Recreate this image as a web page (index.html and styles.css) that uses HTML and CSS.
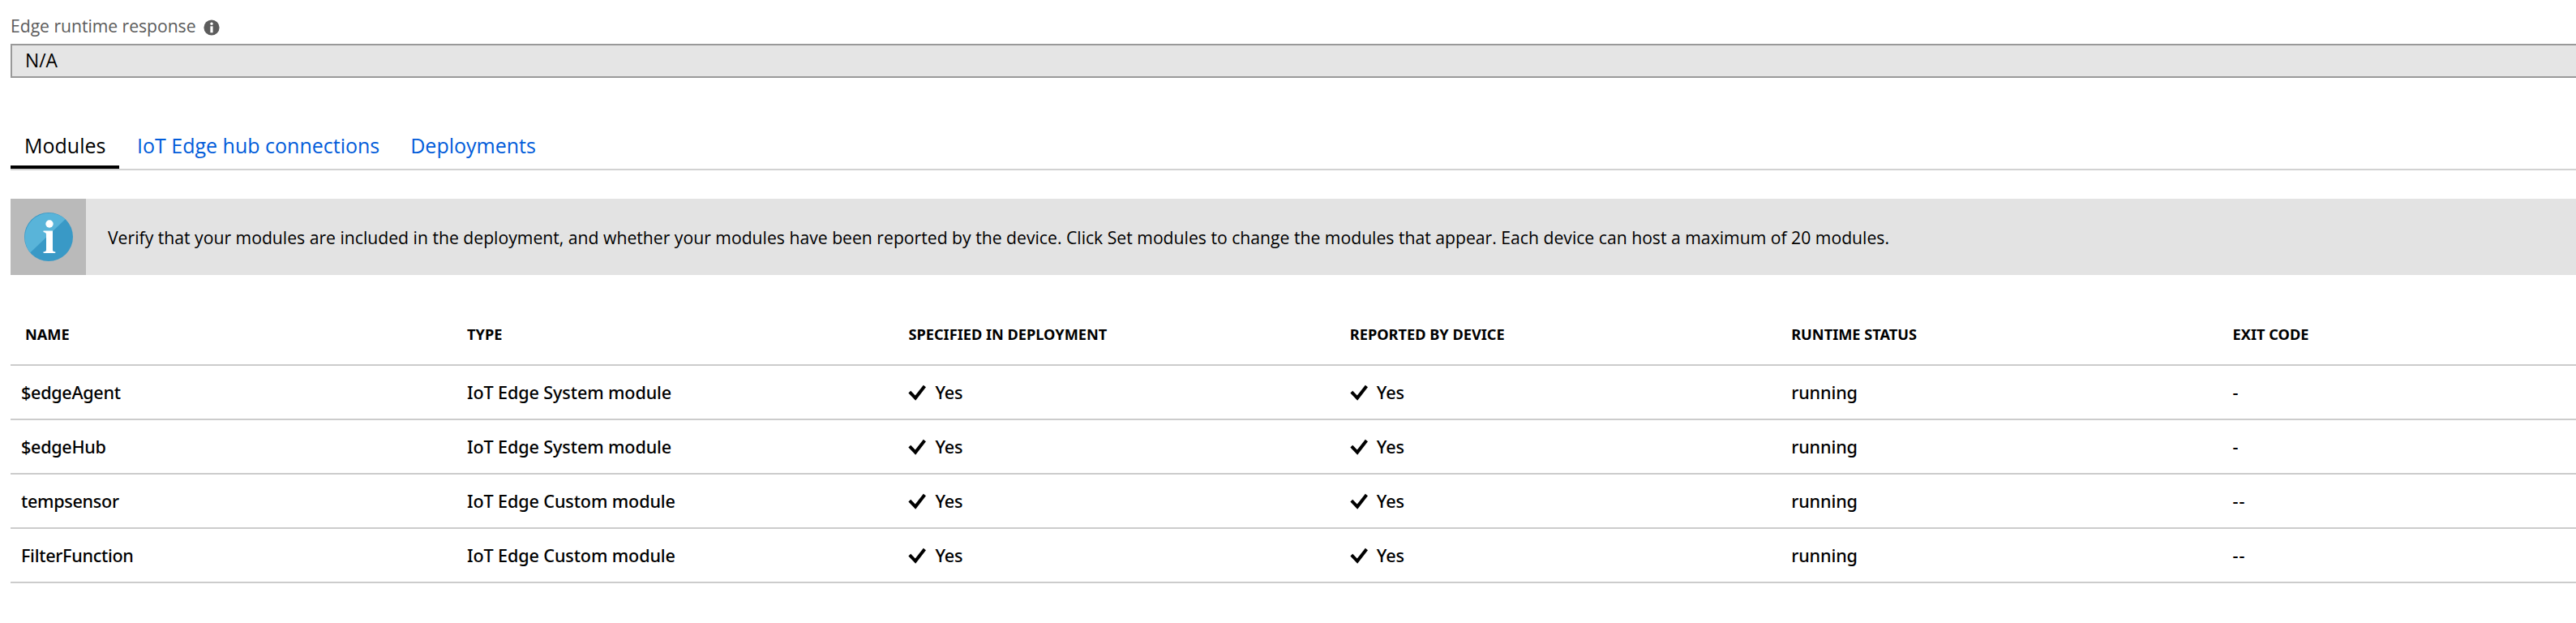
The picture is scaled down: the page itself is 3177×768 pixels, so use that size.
FILE: index.html
```html
<!DOCTYPE html>
<html lang="en">
<head>
<meta charset="utf-8">
<title>IoT Edge device modules</title>
<link rel="stylesheet" href="styles.css">
</head>
<body>
<svg class="sprite" aria-hidden="true">
  <symbol id="check" viewBox="0 0 22 20"><path d="M1.8 9.2 L9 16.600 L20.400 2" fill="none" stroke="#000" stroke-width="4"/></symbol>
</svg>
<main class="page">
  <div class="label">
    <span>Edge runtime response</span>
    <svg class="hint" viewBox="0 0 20 20"><circle cx="10" cy="10" r="9.6" fill="#5c5c5c"/><circle cx="10" cy="5.2" r="1.7" fill="#fff"/><path d="M8.4 8.3h3.2v8H8.4z" fill="#fff"/></svg>
  </div>
  <div class="field">N/A</div>
  <nav class="tabs">
    <a class="tab active">Modules</a>
    <a class="tab hub">IoT Edge hub connections</a>
    <a class="tab">Deployments</a>
  </nav>
  <section class="banner">
    <div class="banner-icon">
      <svg class="info" viewBox="0 0 60 60"><circle cx="30" cy="30" r="30" fill="#3999c6"/><path d="M50.5 8.2A30 30 0 0 0 7.2 49.4z" fill="#59b4d9"/><circle cx="31" cy="14" r="4.7" fill="#fff"/><path d="M23.5 22.5H35V46q0 2 3.3 2.500V50H23.500v-1.500Q27 48 27 46V27q0-2.500-3.500-3z" fill="#fff"/></svg>
    </div>
    <p class="banner-text">Verify that your modules are included in the deployment, and whether your modules have been reported by the device. Click Set modules to change the modules that appear. Each device can host a maximum of 20 modules.</p>
  </section>
  <section class="table">
    <div class="row head"><span class="first">NAME</span><span>TYPE</span><span>SPECIFIED IN DEPLOYMENT</span><span>REPORTED BY DEVICE</span><span>RUNTIME STATUS</span><span>EXIT CODE</span></div>
    <div class="row"><span class="first">$edgeAgent</span><span>IoT Edge System module</span><span class="yes"><svg class="check"><use href="#check"/></svg>Yes</span><span class="yes"><svg class="check"><use href="#check"/></svg>Yes</span><span>running</span><span class="code">-</span></div>
    <div class="row"><span class="first">$edgeHub</span><span>IoT Edge System module</span><span class="yes"><svg class="check"><use href="#check"/></svg>Yes</span><span class="yes"><svg class="check"><use href="#check"/></svg>Yes</span><span>running</span><span class="code">-</span></div>
    <div class="row"><span class="first">tempsensor</span><span>IoT Edge Custom module</span><span class="yes"><svg class="check"><use href="#check"/></svg>Yes</span><span class="yes"><svg class="check"><use href="#check"/></svg>Yes</span><span>running</span><span class="code">--</span></div>
    <div class="row"><span class="first">FilterFunction</span><span>IoT Edge Custom module</span><span class="yes"><svg class="check"><use href="#check"/></svg>Yes</span><span class="yes"><svg class="check"><use href="#check"/></svg>Yes</span><span>running</span><span class="code">--</span></div>
  </section>
</main>
</body>
</html>
```
FILE: styles.css
```css
* { box-sizing: border-box; }
body { margin: 0; background: #fff; color: #000; font-family: "Open Sans", "Noto Sans", sans-serif; overflow: hidden; }
.sprite { display: none; }
.page { padding: 12px 0 0 13px; }
.label { display: flex; align-items: flex-start; height: 42px; font-size: 21.2px; letter-spacing: -0.05px; line-height: 40px; color: #5c5c5c; }
.hint { width: 20px; height: 20px; margin: 12px 0 0 9px; }
.field { height: 42px; border: 2px solid #999; border-right: 0; background: #e5e5e5; padding-left: 16px; font-size: 22.8px; line-height: 38px; }
.tabs { display: flex; height: 114px; padding-top: 52px; border-bottom: 2px solid #d2d2d2; font-size: 25px; line-height: 62px; }
.tab { color: #015cda; height: 60px; margin-right: 38px; }
.tab.active { width: 134px; margin-right: 22px; padding-left: 17px; color: #000; border-bottom: 4px solid #000; }
.banner { display: flex; height: 94px; margin-top: 35px; background: #e3e3e3; }
.banner-icon { width: 93px; padding: 17px 0 0 17px; background: #bababa; }
.info { display: block; width: 60px; height: 60px; }
.banner-text { margin: 0; padding-left: 27px; font-size: 21.18px; line-height: 95px; white-space: nowrap; }
.table { margin-top: 43px; }
.row { display: grid; grid-template-columns: 563px 544.4px 544.4px 544.4px 544.4px 1fr; height: 67px; border-bottom: 2px solid #ccc; font-family: "Noto Sans", sans-serif; font-size: 21.6px; font-weight: 500; letter-spacing: -0.12px; line-height: 66px; white-space: nowrap; }
.first { padding-left: 13px; letter-spacing: -0.3px; }
.row.head { height: 69px; font-size: 18.2px; font-weight: 700; letter-spacing: 0; line-height: 61px; }
.head .first { padding-left: 18px; letter-spacing: 0; }
.yes { display: flex; }
.check { width: 22px; height: 20px; margin: 23px 11px 0 0; }
.code { letter-spacing: 1px; }
```
